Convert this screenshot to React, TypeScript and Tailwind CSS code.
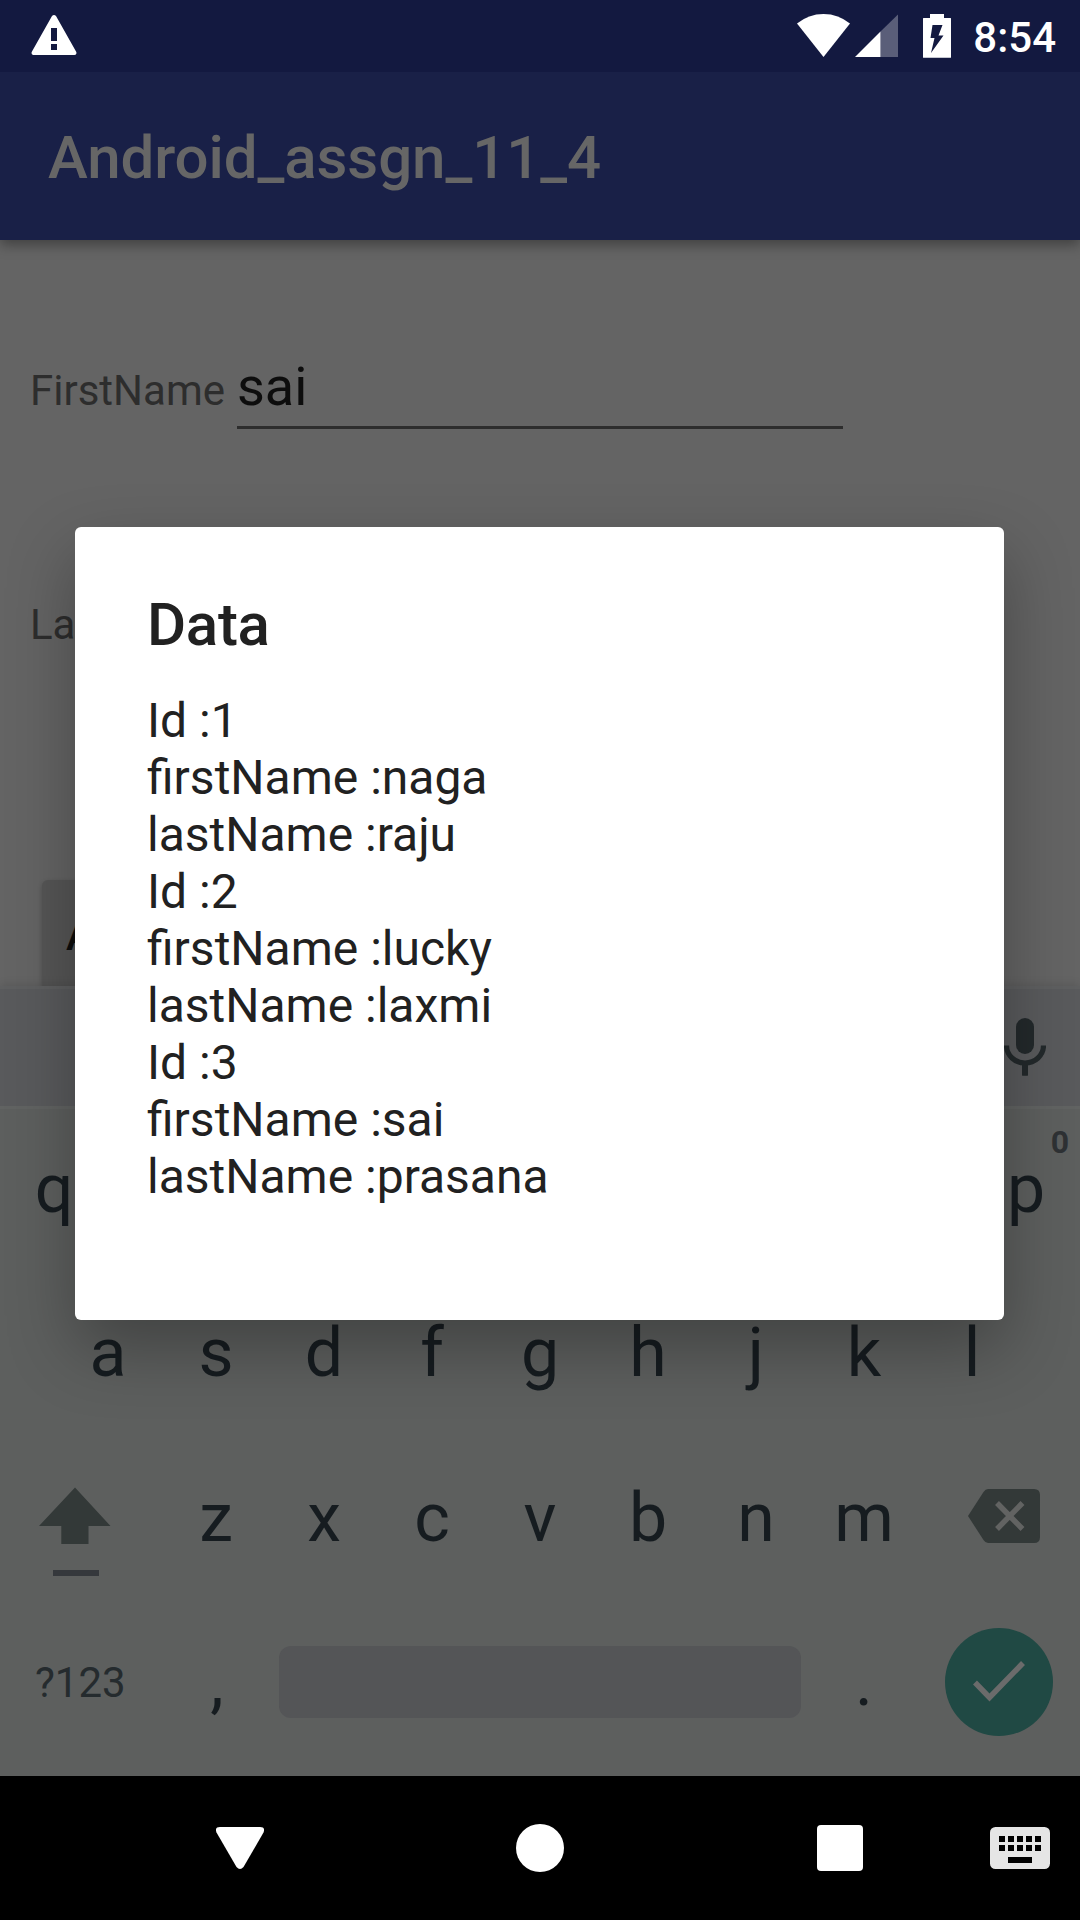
import React from 'react';

const records = [
  { id: 1, first: 'naga', last: 'raju' },
  { id: 2, first: 'lucky', last: 'laxmi' },
  { id: 3, first: 'sai', last: 'prasana' },
];

function StatusBar() {
  return (
    <header className="relative z-20 flex h-[72px] shrink-0 items-start bg-[#131940] text-white">
      <svg className="mt-[15px] ml-[31px] h-[40px] w-[46px]" viewBox="0 0 46 40">
        <path
          fill="currentColor"
          fillRule="evenodd"
          d="M21 1Q23 -1 25 1L45.3 37Q46 40 43.5 40H2.5Q0 40 .7 37ZM20 13V26H26V13ZM20 29V35H26V29Z"
        />
      </svg>
      <svg className="mt-[14px] ml-auto h-[43px] w-[53px]" viewBox="0 0 53 43">
        <path fill="currentColor" d="M0 9.6Q11.500 0 26.500 0T53 9.600L26.500 43Z" />
      </svg>
      <svg className="mt-[14px] ml-[5px] h-[43px] w-[43px]" viewBox="0 0 43 43">
        <path fill="currentColor" fillOpacity=".3" d="M25.500 17.500L43 .5V43H25.500Z" />
        <path fill="currentColor" d="M0 43L25.500 17.500V43Z" />
      </svg>
      <svg className="mt-[14px] ml-[25px] h-[44px] w-[28px]" viewBox="0 0 28 44">
        <path
          fill="currentColor"
          fillRule="evenodd"
          d="M7 0H21V4H27.500Q28 4 28 4.500V43.200Q28 43.700 27.500 43.700H.5Q0 43.700 0 43.200V4.500Q0 4 .5 4H7ZM9.500 11L7.500 24H11.500L8 39L20.500 21.500H15.500L19.500 11Z"
        />
      </svg>
      <span className="mt-[13px] mr-[24px] ml-[22px] text-[42px] leading-[49px] font-medium">8:54</span>
    </header>
  );
}

function AppBar() {
  return (
    <div className="relative z-10 flex h-[168px] shrink-0 items-center bg-[#192047] px-12 pt-1 shadow-[0_5px_12px_rgba(0,0,0,0.35)]">
      <h1 className="text-[60px] leading-[70px] font-medium tracking-[-0.08px] text-[#666666]">Android_assgn_11_4</h1>
    </div>
  );
}

function Form() {
  return (
    <main className="h-[746px] shrink-0 overflow-hidden bg-[#646464] pt-[115px] text-[#2d2d2d]">
      <div className="flex items-baseline pl-[30px]">
        <span className="w-[207px] text-[42px] leading-[49px]">FirstName</span>
        <div className="w-[606px] border-b-[3px] border-[#2d2d2d] pb-[8px] text-[54px] leading-[63px] text-[#0d0d0d]">
          sai
        </div>
      </div>
      <div className="mt-[171px] pl-[30px] text-[42px] leading-[49px]">La</div>
      <div className="mt-[231px] ml-[42px] h-[120px] w-[240px] rounded-[6px] bg-[#565656] px-[24px] pt-[31px] text-[42px] leading-[49px] font-medium text-[#0d0d0d] shadow-[0_2px_5px_rgba(0,0,0,0.2)]">
        A
      </div>
    </main>
  );
}

function Keys({ letters }: { letters: string }) {
  return (
    <>
      {letters.split('').map((letter) => (
        <span key={letter} className="w-[108px] text-center">
          {letter}
        </span>
      ))}
    </>
  );
}

function Keyboard() {
  return (
    <section className="relative flex h-[790px] shrink-0 flex-col bg-[#5d5f5e] text-[68px] leading-[80px] text-[#161c20] shadow-[0_-1px_9px_rgba(0,0,0,0.12)]">
      <div className="flex h-[120px] shrink-0 items-start border-t-[3px] border-[#5e5f60] bg-[#595a5c]">
        <svg className="mt-[29px] mr-[34px] ml-auto h-[58px] w-[42px] text-[#23292b]" viewBox="0 0 42 58">
          <rect x="12" y="0" width="18" height="36" rx="9" fill="currentColor" />
          <path d="M2.500 27.500C2.500 37.500 11 45 21 45S39.500 37.500 39.500 27.500M21 45V57.500" fill="none" stroke="currentColor" strokeWidth="5.200" />
          <path d="M18 45H24V57.500H18Z" fill="currentColor" />
        </svg>
      </div>
      <div className="relative flex h-[165px] shrink-0 items-center justify-between border-t-[3px] border-[#616362] pb-[3px]">
        <Keys letters="qp" />
        <span className="absolute top-[15px] right-[11px] text-[32px] leading-[36px] font-bold text-[#2e3134]">0</span>
      </div>
      <div className="flex h-[165px] shrink-0 items-center justify-center pb-[2px]">
        <Keys letters="asdfghjkl" />
      </div>
      <div className="flex h-[165px] shrink-0 items-center pb-[2px]">
        <div className="w-[162px] self-start pt-[51px] pl-[39px]">
          <svg className="h-[90px] w-[72px]" viewBox="0 0 72 90">
            <path fill="#333938" d="M36 .5L71.500 39H49.500V57H22.300V39H0Z" />
            <path fill="#35383c" d="M14 83H60V89H14Z" />
          </svg>
        </div>
        <Keys letters="zxcvbnm" />
        <div className="w-[162px] self-start pt-[53px] pl-[50px]">
          <svg className="h-[54px] w-[72px]" viewBox="0 0 72 54">
            <path fill="#333938" d="M20 0H66Q72 0 72 6V48Q72 54 66 54H20Q17.500 54 15.500 51L0 27L15.500 3Q17.500 0 20 0Z" />
            <path d="M29 14L54.500 40M54.500 14L29 40" stroke="#626362" strokeWidth="5.500" />
          </svg>
        </div>
      </div>
      <div className="flex h-[165px] shrink-0 items-center pb-[3px]">
        <span className="w-[162px] pl-[35px] text-[42px] leading-[49px] text-[#252b2e]">?123</span>
        <span className="w-[108px] pl-[2px] text-center">,</span>
        <div className="ml-[9px] h-[72px] w-[522px] rounded-[12px] bg-[#545557]" />
        <span className="ml-[9px] w-[108px] text-center">.</span>
        <div className="ml-[27px] h-[108px] w-[108px] rounded-full bg-[#204944]">
          <svg className="size-full" viewBox="0 0 108 108">
            <path d="M30 54.500L44.500 69.500L78 35" fill="none" stroke="#6b6b6b" strokeWidth="5.500" />
          </svg>
        </div>
      </div>
    </section>
  );
}

function NavigationBar() {
  return (
    <nav className="flex h-[144px] shrink-0 items-center bg-black text-white">
      <svg className="ml-[216px] h-[42px] w-[48px]" viewBox="0 0 48 42">
        <path fill="currentColor" d="M4 0H44Q49.500 0 47.500 5.500L27.500 40Q24 44 20.500 40L.5 5.500Q-1.500 0 4 0Z" />
      </svg>
      <div className="ml-[252px] size-[48px] rounded-full bg-white" />
      <div className="ml-[253px] size-[46px] rounded-[4px] bg-white" />
      <svg className="ml-[127px] h-[42px] w-[60px]" viewBox="0 0 60 42">
        <rect width="60" height="42" rx="5.500" fill="#e5e5e5" />
        {[9, 18, 27, 36, 45].map((x) => (
          <path key={x} d={`M${x} 9h6v6h-6zM${x} 18h6v6h-6z`} fill="black" />
        ))}
        <path d="M18 30H42V36H18Z" fill="black" />
      </svg>
    </nav>
  );
}

function DataDialog() {
  return (
    <div
      role="dialog"
      className="absolute top-[527px] left-[75px] z-20 h-[793px] w-[929px] rounded-[6px] bg-white px-[72px] pt-[63px] text-[#212121] shadow-[0_28px_68px_rgba(0,0,0,0.3)]"
    >
      <h2 className="text-[60px] leading-[70px] font-medium tracking-[-0.3px]">Data</h2>
      <div className="mt-[32px] text-[48px] leading-[57px]">
        {records.map((record) => (
          <React.Fragment key={record.id}>
            <p>{`Id :${record.id}`}</p>
            <p>{`firstName :${record.first}`}</p>
            <p>{`lastName :${record.last}`}</p>
          </React.Fragment>
        ))}
      </div>
    </div>
  );
}

export default function App() {
  return (
    <div className="relative flex h-[1920px] w-[1080px] flex-col overflow-hidden bg-black font-[Roboto,sans-serif]">
      <StatusBar />
      <AppBar />
      <Form />
      <Keyboard />
      <NavigationBar />
      <DataDialog />
    </div>
  );
}
